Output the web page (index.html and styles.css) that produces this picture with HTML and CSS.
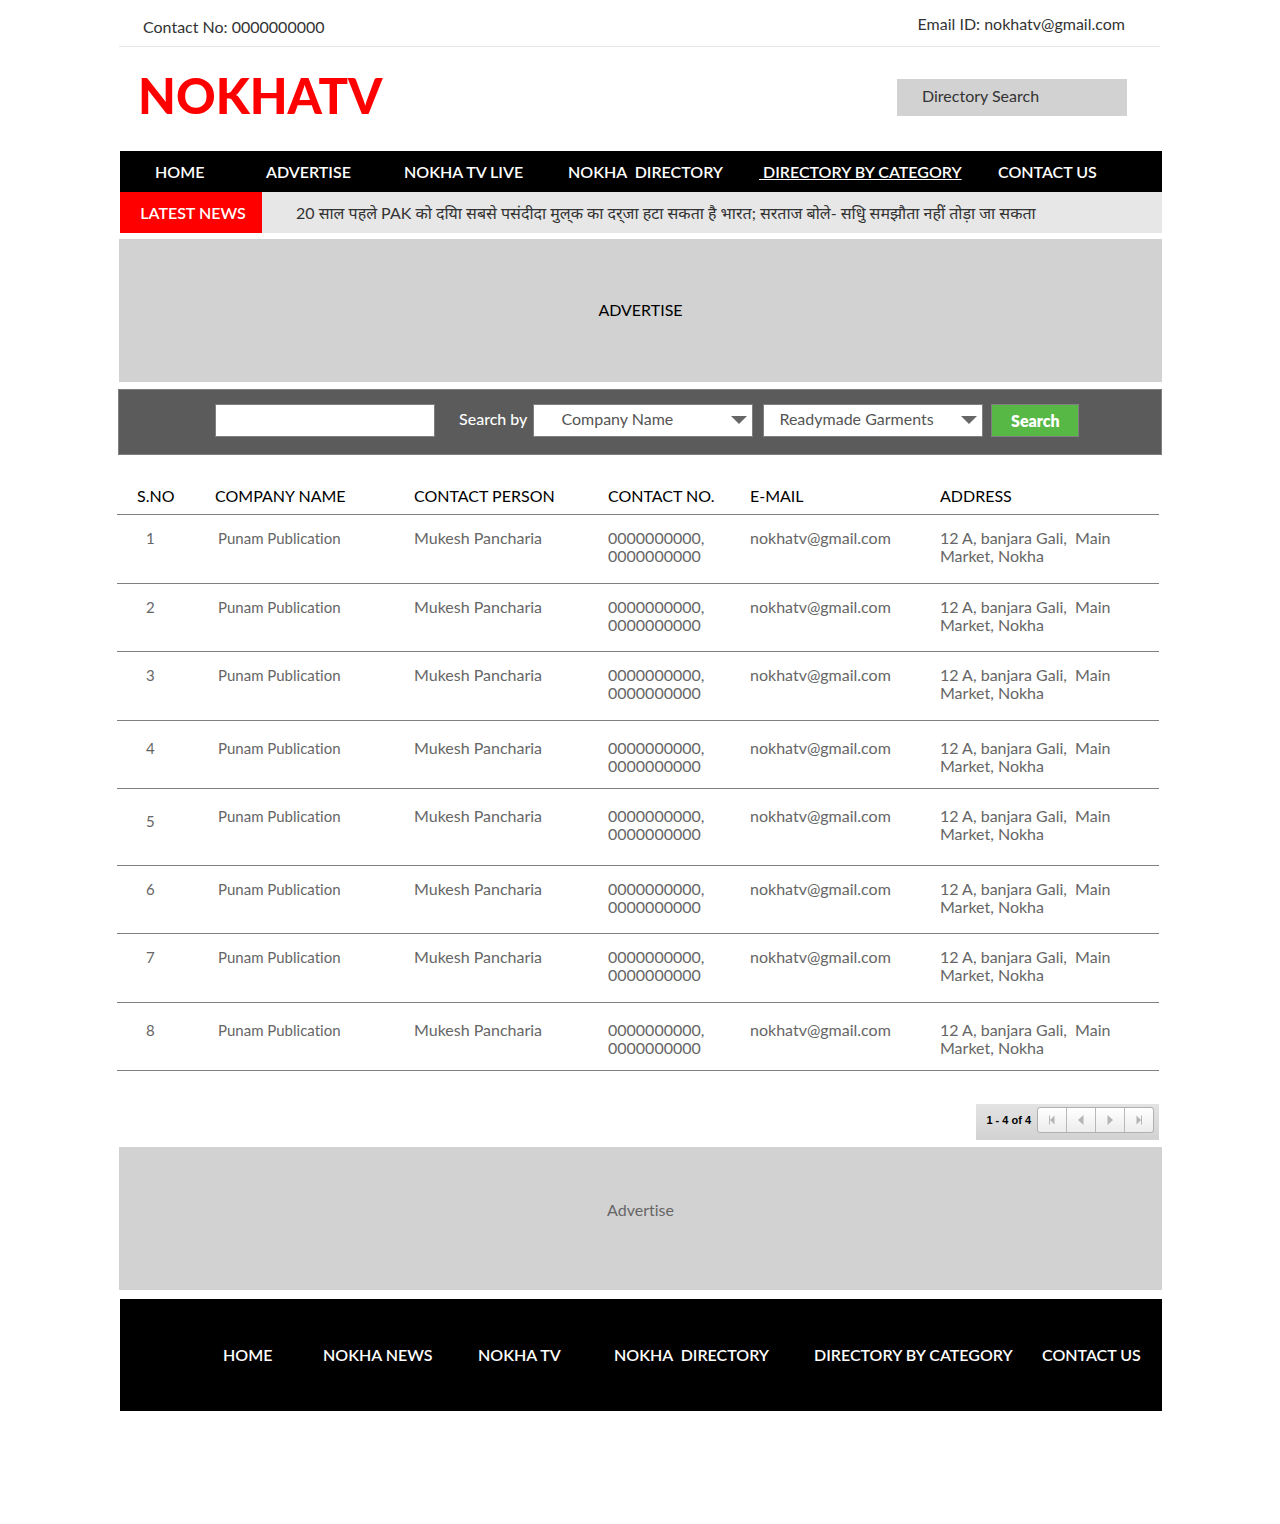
FILE: index.html
```html
<!DOCTYPE html>
<html lang="en">
<head>
<meta charset="utf-8">
<meta name="viewport" content="width=device-width, initial-scale=1">
<title>NOKHATV - Directory by Category</title>
<link rel="stylesheet" href="styles.css">
</head>
<body>
<div class="page">
  <header>
    <div class="topbar">
      <span class="phone">Contact No: 0000000000</span>
      <span class="email">Email ID: nokhatv@gmail.com</span>
    </div>
    <div class="masthead">
      <h1 class="logo">NOKHATV</h1>
      <input class="directory-search" type="text" placeholder="Directory Search" aria-label="Directory Search">
    </div>
    <nav class="nav" aria-label="Main">
      <a href="#">HOME</a>
      <a href="#">ADVERTISE</a>
      <a href="#">NOKHA TV LIVE</a>
      <a href="#">NOKHA  DIRECTORY</a>
      <a href="#" class="current"> DIRECTORY BY CATEGORY</a>
      <a href="#">CONTACT US</a>
    </nav>
    <div class="news">
      <strong class="news-label">LATEST NEWS</strong>
      <p class="news-text" lang="hi">20 साल पहले PAK को दयिा सबसे पसंदीदा मुल्&zwnj;क का दर्&zwnj;जा हटा सकता है भारत; सरताज बोले- सधिु समझौता नहीं तोड़ा जा सकता</p>
    </div>
  </header>
  <main>
    <section class="ad ad-top">ADVERTISE</section>
    <form class="search">
      <input class="field" type="text" aria-label="Search text">
      <label class="search-by" for="by">Search by</label>
      <span class="select-box">
        <select class="field by" id="by"><option>Company Name</option></select>
        <svg class="arrow" viewBox="0 0 16 8" aria-hidden="true"><path d="M0 0h16L8 8z"/></svg>
      </span>
      <span class="select-box">
        <select class="field category" aria-label="Category"><option>Readymade Garments</option></select>
        <svg class="arrow" viewBox="0 0 16 8" aria-hidden="true"><path d="M0 0h16L8 8z"/></svg>
      </span>
      <button class="submit" type="submit">Search</button>
    </form>
    <table class="directory">
      <colgroup><col class="c-no"><col class="c-company"><col class="c-person"><col class="c-phone"><col class="c-mail"><col></colgroup>
      <thead>
        <tr><th>S.NO</th><th>COMPANY NAME</th><th>CONTACT PERSON</th><th>CONTACT NO.</th><th>E-MAIL</th><th>ADDRESS</th></tr>
      </thead>
      <tbody>
        <tr><td>1</td><td>Punam Publication</td><td>Mukesh Pancharia</td><td>0000000000,<br>0000000000</td><td>nokhatv@gmail.com</td><td>12 A, banjara Gali,&nbsp; Main<br>Market, Nokha</td></tr>
        <tr><td>2</td><td>Punam Publication</td><td>Mukesh Pancharia</td><td>0000000000,<br>0000000000</td><td>nokhatv@gmail.com</td><td>12 A, banjara Gali,&nbsp; Main<br>Market, Nokha</td></tr>
        <tr><td>3</td><td>Punam Publication</td><td>Mukesh Pancharia</td><td>0000000000,<br>0000000000</td><td>nokhatv@gmail.com</td><td>12 A, banjara Gali,&nbsp; Main<br>Market, Nokha</td></tr>
        <tr class="roomy"><td>4</td><td>Punam Publication</td><td>Mukesh Pancharia</td><td>0000000000,<br>0000000000</td><td>nokhatv@gmail.com</td><td>12 A, banjara Gali,&nbsp; Main<br>Market, Nokha</td></tr>
        <tr class="roomy tall"><td>5</td><td>Punam Publication</td><td>Mukesh Pancharia</td><td>0000000000,<br>0000000000</td><td>nokhatv@gmail.com</td><td>12 A, banjara Gali,&nbsp; Main<br>Market, Nokha</td></tr>
        <tr><td>6</td><td>Punam Publication</td><td>Mukesh Pancharia</td><td>0000000000,<br>0000000000</td><td>nokhatv@gmail.com</td><td>12 A, banjara Gali,&nbsp; Main<br>Market, Nokha</td></tr>
        <tr><td>7</td><td>Punam Publication</td><td>Mukesh Pancharia</td><td>0000000000,<br>0000000000</td><td>nokhatv@gmail.com</td><td>12 A, banjara Gali,&nbsp; Main<br>Market, Nokha</td></tr>
        <tr class="roomy"><td>8</td><td>Punam Publication</td><td>Mukesh Pancharia</td><td>0000000000,<br>0000000000</td><td>nokhatv@gmail.com</td><td>12 A, banjara Gali,&nbsp; Main<br>Market, Nokha</td></tr>
      </tbody>
    </table>
    <div class="pager">
      <span class="count">1 - 4 of 4</span>
      <div class="pager-buttons">
        <button type="button" aria-label="First page"><svg viewBox="0 0 12 12"><path d="M3 1.500h1v9H3zM8.500 1.500v9L4 6z"/></svg></button>
        <button type="button" aria-label="Previous page"><svg viewBox="0 0 12 12"><path d="M8.500 1v10L3 6z"/></svg></button>
        <button type="button" aria-label="Next page"><svg viewBox="0 0 12 12"><path d="M3.500 1v10L9 6z"/></svg></button>
        <button type="button" aria-label="Last page"><svg viewBox="0 0 12 12"><path d="M8 1.500h1v9H8zM3.500 1.500v9L8 6z"/></svg></button>
      </div>
    </div>
    <section class="ad ad-bottom">Advertise</section>
  </main>
  <footer class="footer">
    <a href="#">HOME</a>
    <a href="#">NOKHA NEWS</a>
    <a href="#">NOKHA TV</a>
    <a href="#">NOKHA  DIRECTORY</a>
    <a href="#">DIRECTORY BY CATEGORY</a>
    <a href="#">CONTACT US</a>
  </footer>
</div>
</body>
</html>
```
FILE: styles.css
```css
* { box-sizing: border-box; }

body {
  margin: 0;
  background: #fff;
  color: #333;
  font: 16px/18px Lato, "Noto Sans", sans-serif;
  font-variant-ligatures: none;
}

input, select, button { font: inherit; }

.page {
  max-width: 1044px;
  margin: 0 auto;
  padding-bottom: 113px;
}

/* Header */
.topbar {
  display: flex;
  justify-content: space-between;
  margin: 0 2px 0 1px;
  padding: 15px 35px 10px 24px;
  border-bottom: 1px solid #e6e6e6;
}
.phone { padding-top: 3px; }

.masthead {
  display: flex;
  justify-content: space-between;
  align-items: flex-start;
  height: 104px;
  padding: 32px 35px 0 20px;
}
.logo {
  margin: 0;
  color: #f00;
  font-size: 49px;
  line-height: 32px;
  font-weight: 900;
}
.directory-search {
  width: 230px;
  height: 37px;
  padding: 0 25px 4px;
  border: 0;
  border-radius: 0;
  background: #d2d2d2;
}
.directory-search::placeholder { color: #333; opacity: 1; }

.nav, .footer {
  display: grid;
  align-items: center;
  margin-left: 2px;
  background: #000;
}
.nav {
  grid-template-columns: 111fr 138fr 164fr 191fr 239fr 164fr;
  height: 41px;
  padding-left: 35px;
}
.nav a, .footer a {
  justify-self: start;
  color: #fff;
  font-weight: 600;
  text-decoration: none;
  white-space: pre;
}
.nav .current { text-decoration: underline; }

.news {
  display: flex;
  align-items: center;
  height: 41px;
  margin-left: 2px;
  background: #e7e7e7;
}
.news-label {
  display: flex;
  flex: none;
  align-items: center;
  justify-content: center;
  align-self: stretch;
  width: 142px;
  padding-left: 4px;
  background: #f00;
  color: #fff;
  font-weight: 600;
}
.news-text { margin: 0 0 0 34px; }

/* Advertising areas */
.ad {
  display: flex;
  align-items: center;
  justify-content: center;
  height: 143px;
  margin-left: 1px;
  background: #d2d2d2;
}
.ad-top { margin-top: 6px; padding-bottom: 2px; color: #000; }
.ad-bottom { margin-top: 7px; padding-bottom: 18px; color: #666; }

/* Search form */
.search {
  display: flex;
  align-items: flex-start;
  height: 66px;
  margin-top: 7px;
  padding: 14px 0 0 96px;
  border: 1px solid #808080;
  background: #5b5b5b;
}
.field {
  width: 220px;
  height: 33px;
  padding: 0 15px 4px;
  border: 1px solid #808080;
  border-radius: 0;
  background: #fff;
  color: #555;
  appearance: none;
}
.by { padding-left: 27px; }
.search-by {
  padding: 6px 6px 0 24px;
  color: #fff;
  font-weight: 500;
}
.select-box {
  position: relative;
  margin-right: 10px;
}
.select-box:last-of-type { margin-right: 8px; }
.arrow {
  position: absolute;
  top: 12px;
  right: 6px;
  width: 16px;
  height: 8px;
  fill: #666;
  pointer-events: none;
}
.submit {
  width: 88px;
  height: 33px;
  padding: 0;
  border: 1px solid #808080;
  background: #57b846;
  color: #fff;
  font-weight: 800;
}

/* Company directory */
.directory {
  width: calc(100% - 2px);
  margin: 32px 0 0 -1px;
  border-collapse: collapse;
  table-layout: fixed;
  color: #666;
}
.c-no { width: 98px; }
.c-company { width: 199px; }
.c-person { width: 194px; }
.c-phone { width: 142px; }
.c-mail { width: 190px; }
.directory tr { height: 68px; border-bottom: 1px solid #808080; }
.directory tbody tr:nth-child(odd) { height: 69px; }
.directory thead tr { height: 27px; }
.directory th {
  padding: 0 0 9px;
  color: #000;
  font-weight: 400;
  text-align: left;
  vertical-align: top;
}
.directory td {
  padding: 14px 0 0;
  vertical-align: top;
}
.directory .roomy td { padding-top: 18px; }
.directory tbody .tall:nth-child(odd) { height: 77px; }
.directory .tall td:first-child { padding-top: 23px; }
.directory th:first-child { padding-left: 20px; }
.directory td:first-child { padding-left: 29px; font-size: 15px; }
.directory td:nth-child(2) { padding-left: 3px; font-size: 15px; }

/* Pager */
.pager {
  display: flex;
  align-items: flex-start;
  justify-content: flex-end;
  width: 183px;
  height: 36px;
  margin: 33px 3px 0 auto;
  padding: 3px 5px 0 0;
  background: linear-gradient(#e3e3e3, #d2d2d2);
}
.count {
  padding: 4px 6px 0 0;
  color: #000;
  font: bold 11px/18px "Liberation Sans", Arial, sans-serif;
}
.pager-buttons {
  display: flex;
  width: 117px;
  height: 26px;
  border: 1px solid #b0b0b0;
  border-radius: 3px;
  background: linear-gradient(#fff, #ececec);
}
.pager-buttons button {
  display: flex;
  flex: 1;
  align-items: center;
  justify-content: center;
  padding: 0;
  border: 0;
  border-left: 1px solid #b8b8b8;
  background: none;
}
.pager-buttons button:first-child { border-left: 0; }
.pager-buttons svg { width: 12px; height: 12px; fill: #b4b4b4; }

/* Footer */
.footer {
  grid-template-columns: 100fr 155fr 136fr 200fr 228fr 120fr;
  height: 112px;
  margin-top: 9px;
  padding-left: 103px;
}
```
